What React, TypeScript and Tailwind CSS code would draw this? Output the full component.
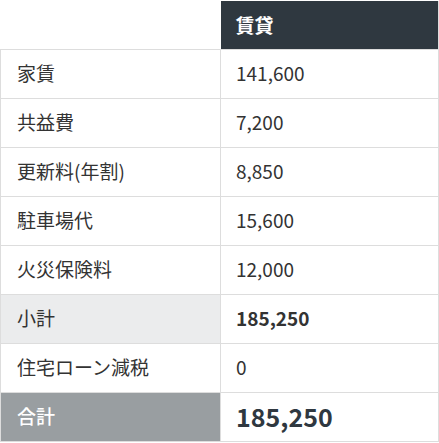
import React from 'react';

type Row = { label: string; value: string; kind?: 'sub' | 'total' };

const rows: Row[] = [
    { label: '家賃', value: '141,600' },
    { label: '共益費', value: '7,200' },
    { label: '更新料(年割)', value: '8,850' },
    { label: '駐車場代', value: '15,600' },
    { label: '火災保険料', value: '12,000' },
    { label: '小計', value: '185,250', kind: 'sub' },
    { label: '住宅ローン減税', value: '0' },
    { label: '合計', value: '185,250', kind: 'total' },
];

const App: React.FC = () => {
    return (
        <div
            className="w-[439px] bg-white text-[#333] text-[19px]"
            style={{ fontFamily: '"Noto Sans CJK JP", "Noto Sans", sans-serif' }}
        >
            <table className="w-[439px] border-collapse table-fixed mt-px">
                <colgroup>
                    <col className="w-[220px]" />
                    <col />
                </colgroup>
                <thead>
                    <tr className="h-[48px]">
                        <th className="p-0" />
                        <th className="bg-[#2f3840] text-white text-left font-bold px-[15px] border-r border-[#ddd]">賃貸</th>
                    </tr>
                </thead>
                <tbody>
                    {rows.map(r => {
                        const labelCls =
                            r.kind === 'total'
                                ? 'bg-[#999ea1] text-white font-medium'
                                : r.kind === 'sub'
                                ? 'bg-[#ebeced]'
                                : '';
                        const valueCls =
                            r.kind === 'total'
                                ? 'text-[25px] font-bold text-[#2f3840]'
                                : r.kind === 'sub'
                                ? 'font-semibold'
                                : '';
                        return (
                            <tr key={r.label + r.kind} className="h-[49px]">
                                <td className={`border border-[#ddd] pl-4 ${labelCls}`}>{r.label}</td>
                                <td className={`border border-[#ddd] pl-[15px] ${valueCls}`}>{r.value}</td>
                            </tr>
                        );
                    })}
                </tbody>
            </table>
        </div>
    );
};

export default App;
